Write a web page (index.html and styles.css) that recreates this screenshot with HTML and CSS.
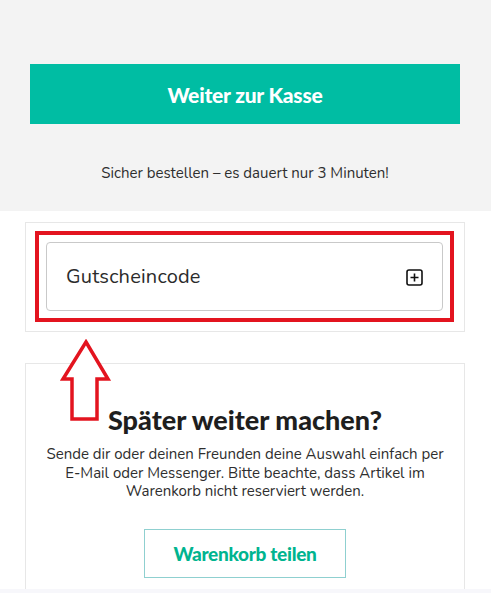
FILE: index.html
```html
<!DOCTYPE html>
<html lang="de">
<head>
<meta charset="utf-8">
<link rel="stylesheet" href="styles.css">
</head>
<body>
<div class="page">
  <section class="checkout">
    <button class="btn-primary">Weiter zur Kasse</button>
    <p class="secure">Sicher bestellen – es dauert nur 3 Minuten!</p>
  </section>
  <section class="card coupon-card">
    <div class="highlight">
      <div class="coupon">
        <span class="coupon-label">Gutscheincode</span>
        <svg class="plus" width="17" height="17" viewBox="0 0 17 17" aria-hidden="true">
          <rect x="1" y="1" width="15" height="15" rx="2" fill="none" stroke="#111" stroke-width="1.6"/>
          <path d="M8.5 4.5v8M4.5 8.5h8" stroke="#111" stroke-width="1.6" fill="none"/>
        </svg>
      </div>
    </div>
  </section>
  <section class="card later-card">
    <h2 class="later-title">Später weiter machen?</h2>
    <p class="later-text">Sende dir oder deinen Freunden deine Auswahl einfach per E-Mail oder Messenger. Bitte beachte, dass Artikel im Warenkorb nicht reserviert werden.</p>
    <button class="btn-outline">Warenkorb teilen</button>
  </section>
  <div class="footer-strip"></div>
  <svg class="arrow" width="52" height="84" viewBox="0 0 52 84" aria-hidden="true">
    <path d="M26 3 L48 40 L37 40 L37 80 L12 80 L12 40 L3 40 Z" fill="#fff" stroke="#e3141f" stroke-width="3.5" stroke-linejoin="miter"/>
  </svg>
</div>
</body>
</html>
```
FILE: styles.css
```css
* { box-sizing: border-box; }
html, body { margin: 0; padding: 0; }
body {
  background: #fff;
  font-family: "Nunito", "Lato", "Open Sans", sans-serif;
  color: #2b2b2b;
  width: 491px;
  height: 593px;
  overflow: hidden;
}
.page { position: relative; }
.checkout {
  background: #f3f3f3;
  padding: 64px 31px 28px 30px;
  display: flex;
  flex-direction: column;
  align-items: stretch;
}
.btn-primary {
  height: 60px;
  border: 0;
  background: #00bda3;
  color: #fff;
  font-family: "Lato", sans-serif;
  font-weight: 900;
  font-size: 21px;
  letter-spacing: -0.2px;
  cursor: pointer;
}
.secure {
  margin: 39px 0 0;
  text-align: center;
  font-size: 15px;
  line-height: 20px;
  color: #2e2e2e;
}
.card {
  margin: 0 26px 0 25px;
  border: 1px solid #e7e7e7;
  background: #fff;
}
.coupon-card {
  margin-top: 11px;
  padding: 8px 10px 9px 9px;
}
.highlight {
  border: 4px solid #e3141f;
  padding: 7px;
}
.coupon {
  height: 69px;
  border: 1px solid #c9c9c9;
  border-radius: 4px;
  display: flex;
  align-items: center;
  justify-content: space-between;
  padding: 0 19px;
}
.coupon-label {
  font-size: 20px;
  color: #2b2b2b;
  letter-spacing: 0.2px;
}
.plus { display: block; margin-top: 1px; }
.later-card {
  margin-top: 31px;
  padding: 41px 20px 11px;
  display: flex;
  flex-direction: column;
  align-items: center;
  border-bottom: 0;
}
.later-title {
  margin: 0;
  font-family: "Lato", sans-serif;
  font-weight: 900;
  font-size: 27px;
  line-height: 30px;
  color: #1e1e1e;
}
.later-text {
  margin: 10px 0 0;
  text-align: center;
  font-size: 15px;
  line-height: 18.5px;
  color: #2e2e2e;
}
.btn-outline {
  margin-top: 28px;
  width: 202px;
  height: 49px;
  border: 1px solid #8fd0d0;
  background: #fff;
  color: #00b48f;
  font-family: "Lato", sans-serif;
  font-weight: 900;
  font-size: 19px;
  letter-spacing: -0.3px;
}
.footer-strip {
  height: 10px;
  background: #f7f7fb;
}
.arrow {
  position: absolute;
  left: 60px;
  top: 339px;
}
```
